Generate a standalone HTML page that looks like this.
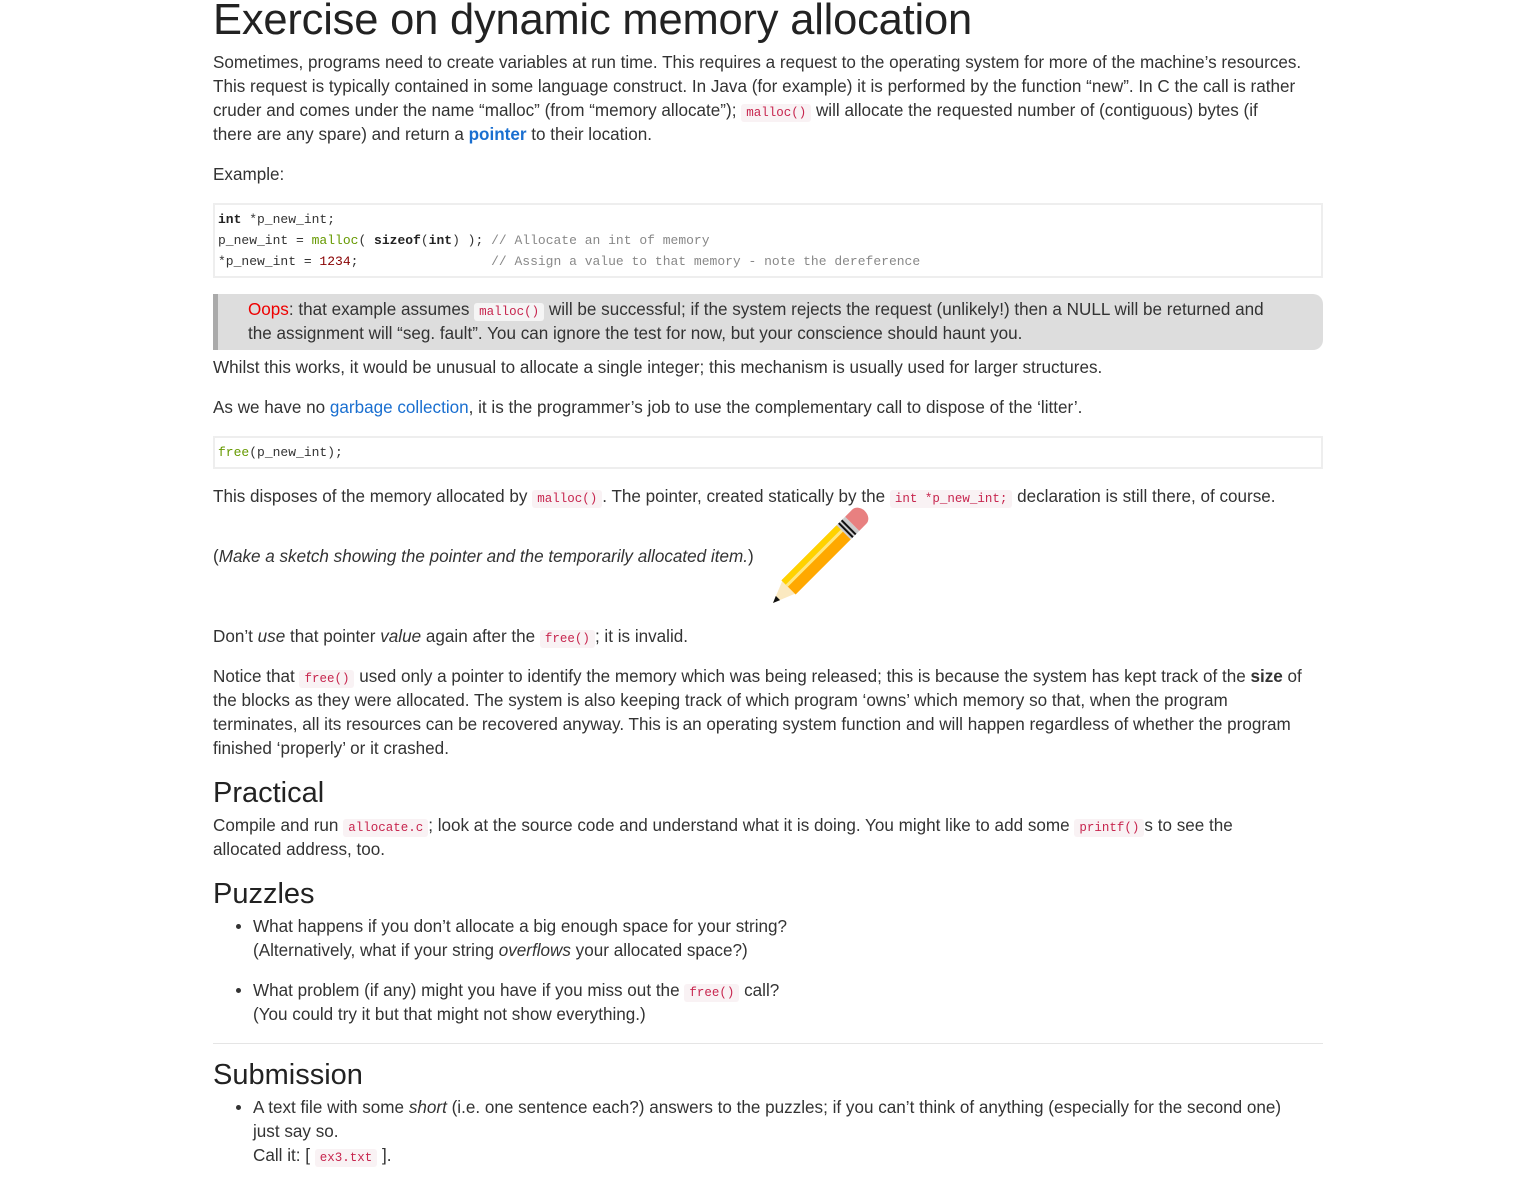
<!DOCTYPE html>
<html><head><meta charset="utf-8"><style>
body{margin:0;background:#fff;font-family:"Liberation Sans",sans-serif;color:#333;font-size:17.1px;line-height:24px}
.c{position:absolute;left:213px;width:1110px;top:0}
h1{font-weight:normal;font-size:43.5px;margin:0;line-height:44px;color:#222;letter-spacing:-0.2px}
h2{font-weight:normal;font-size:29px;margin:0 0 5px;line-height:32px;color:#222}
p{margin:0 0 16px}
code{font-family:"Liberation Mono",monospace;font-size:12.5px;line-height:1;color:#c7254e;background:#f9f2f4;padding:2px 5px;border-radius:3px}
pre{font-family:"Liberation Mono",monospace;font-size:13px;line-height:21px;background:#fff;border:2px solid #eee;margin:0 0 16px;padding:4px 3px;color:#333}
.k{font-weight:bold;color:#222}.cm{color:#888}.n{color:#800}.f{color:#690}
.note{background:#ddd;border-left:5px solid #aaa;border-radius:0 10px 10px 0;padding:4px 30px 4px 30px;margin:0 0 6px}
.note code{background:#f5f5f5}
a{color:#1a6fd0;text-decoration:none}
ul{margin:0 0 16px;padding-left:40px}li{margin-bottom:16px}
hr{border:0;border-top:1px solid #e5e5e5;margin:0 0 15px}
</style></head><body><div class="c">
<h1 style="margin-top:-2px">Exercise on dynamic memory allocation</h1>
<p style="margin-top:9px">Sometimes, programs need to create variables at run time. This requires a request to the operating system for more of the machine’s resources. This request is typically contained in some language construct. In Java (for example) it is performed by the function “new”. In C the call is rather cruder and comes under the name “malloc” (from “memory allocate”); <code>malloc()</code> will allocate the requested number of (contiguous) bytes (if<br>there are any spare) and return a <a style="font-weight:bold">pointer</a> to their location.</p>
<p>Example:</p>
<pre><span class="k">int</span> *p_new_int;
p_new_int = <span class="f">malloc</span>( <span class="k">sizeof</span>(<span class="k">int</span>) ); <span class="cm">// Allocate an int of memory</span>
*p_new_int = <span class="n">1234</span>;                 <span class="cm">// Assign a value to that memory - note the dereference</span></pre>
<div class="note"><span style="color:#e00">Oops</span>: that example assumes <code>malloc()</code> will be successful; if the system rejects the request (unlikely!) then a NULL will be returned and<br>the assignment will “seg. fault”. You can ignore the test for now, but your conscience should haunt you.</div>
<p>Whilst this works, it would be unusual to allocate a single integer; this mechanism is usually used for larger structures.</p>
<p>As we have no <a>garbage collection</a>, it is the programmer’s job to use the complementary call to dispose of the ‘litter’.</p>
<pre><span class="f">free</span>(p_new_int);</pre>
<p>This disposes of the memory allocated by <code>malloc()</code>. The pointer, created statically by the <code>int *p_new_int;</code> declaration is still there, of course.</p>
<p style="margin-top:36px;margin-bottom:56px">(<i>Make a sketch showing the pointer and the temporarily allocated item.</i>)</p>
<p>Don’t <i>use</i> that pointer <i>value</i> again after the <code>free()</code>; it is invalid.</p>
<p>Notice that <code>free()</code> used only a pointer to identify the memory which was being released; this is because the system has kept track of the <b>size</b> of the blocks as they were allocated. The system is also keeping track of which program ‘owns’ which memory so that, when the program<br>terminates, all its resources can be recovered anyway. This is an operating system function and will happen regardless of whether the program<br>finished ‘properly’ or it crashed.</p>
<h2>Practical</h2>
<p>Compile and run <code>allocate.c</code>; look at the source code and understand what it is doing. You might like to add some <code>printf()</code>s to see the<br>allocated address, too.</p>
<h2>Puzzles</h2>
<ul><li>What happens if you don’t allocate a big enough space for your string?<br>(Alternatively, what if your string <i>overflows</i> your allocated space?)</li>
<li>What problem (if any) might you have if you miss out the <code>free()</code> call?<br>(You could try it but that might not show everything.)</li></ul>
<hr>
<h2>Submission</h2>
<ul><li>A text file with some <i>short</i> (i.e. one sentence each?) answers to the puzzles; if you can’t think of anything (especially for the second one)<br>just say so.<br>Call it: [ <code>ex3.txt</code> ].</li></ul>
</div>
<svg style="position:absolute;left:765px;top:505px" width="110" height="105" viewBox="0 0 110 105">
<g transform="translate(8,98) rotate(-45)">
<polygon points="0,0 22,-9 22,9" fill="#fbe9c0"/>
<polygon points="0,0 7,-3 7,3" fill="#111"/>
<rect x="22" y="-10" width="78" height="20" fill="#ffa800"/>
<rect x="22" y="-10" width="78" height="6" fill="#ffd200"/>
<rect x="22" y="-4" width="78" height="3" fill="#ffe880"/>
<rect x="100" y="-10" width="12" height="20" fill="#ccc"/>
<rect x="102" y="-10" width="2" height="20" fill="#111"/><rect x="106" y="-10" width="2" height="20" fill="#111"/>
<path d="M112,-10 h10 a8,10 0 0 1 0,20 h-10z" fill="#e88080"/>
</g></svg>
</body></html>
